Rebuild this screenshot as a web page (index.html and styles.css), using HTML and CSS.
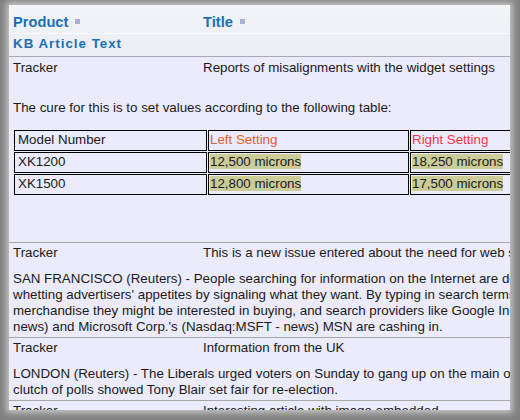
FILE: index.html
```html
<!DOCTYPE html>
<html>
<head>
<meta charset="utf-8">
<link rel="stylesheet" href="styles.css">
</head>
<body>
<div class="frame">
  <div class="panel">
    <div class="hdr">
      <div class="hrow1">
        <div class="c1">Product<span class="sq"></span></div>
        <div class="c2">Title<span class="sq"></span></div>
      </div>
      <div class="hrow2">KB Article Text</div>
    </div>

    <div class="item first">
      <div class="row"><div class="c1">Tracker</div><div class="c2">Reports of misalignments with the widget settings</div></div>
      <div class="body b1">
        <p class="cure">The cure for this is to set values according to the following table:</p>
        <table class="settings">
          <tr><td class="m">Model Number</td><td class="l lh">Left Setting</td><td class="r rh">Right Setting</td></tr>
          <tr><td class="m">XK1200</td><td class="l"><span class="hl">12,500 microns</span></td><td class="r"><span class="hl">18,250 microns</span></td></tr>
          <tr><td class="m">XK1500</td><td class="l"><span class="hl">12,800 microns</span></td><td class="r"><span class="hl">17,500 microns</span></td></tr>
        </table>
      </div>
    </div>

    <div class="item">
      <div class="row"><div class="c1">Tracker</div><div class="c2">This is a new issue entered about the need for web services</div></div>
      <div class="body">SAN FRANCISCO (Reuters) - People searching for information on the Internet are doing more than finding answers --<br>whetting advertisers' appetites by signaling what they want. By typing in search terms, consumers tell retailers what<br>merchandise they might be interested in buying, and search providers like Google Inc. (Nasdaq:GOOG - news), Yahoo Inc. (Nasdaq:YHOO -<br>news) and Microsoft Corp.'s (Nasdaq:MSFT - news) MSN are cashing in.</div>
    </div>

    <div class="item">
      <div class="row"><div class="c1">Tracker</div><div class="c2">Information from the UK</div></div>
      <div class="body">LONDON (Reuters) - The Liberals urged voters on Sunday to gang up on the main opposition Conservatives after a<br>clutch of polls showed Tony Blair set fair for re-election.</div>
    </div>

    <div class="item">
      <div class="row"><div class="c1">Tracker</div><div class="c2">Interesting article with image embedded</div></div>
    </div>
  </div>
</div>
</body>
</html>
```

FILE: styles.css
```css
body {
  margin: 0;
  background: #808080;
  font-family: "Liberation Sans", Arial, sans-serif;
  font-size: 13.33px;
  color: #1a1a1a;
}

.frame {
  padding: 5px 10px 10px 9px;
}

.panel {
  width: 501px;
  height: 405px;
  overflow: hidden;
  background: #ebebfb;
  box-shadow: 0 0 6px 3px #c4c4c4;
}

.hrow1 {
  display: flex;
  padding: 9px 0 3px 4px;
  line-height: 16px;
  font-size: 14.67px;
  font-weight: bold;
  color: #1a70b6;
  background: linear-gradient(#f4f5f9, #eef0f5);
}

.hrow2 {
  border-top: 1px solid #f8f9fb;
  border-bottom: 1px solid #a8a8b6;
  padding: 2px 0 4px 4px;
  line-height: 16px;
  font-size: 13.33px;
  font-weight: bold;
  letter-spacing: 1px;
  color: #1a70b6;
  background: #edeff4;
}

.sq {
  display: inline-block;
  width: 5px;
  height: 5px;
  margin-left: 7px;
  vertical-align: 3px;
  background: #a9b0d2;
}

.c1 {
  width: 190px;
  flex: none;
}

.c2 {
  white-space: nowrap;
}

.item {
  border-bottom: 1px solid #a8a8a8;
  padding: 2px 0 2px 4px;
}

.item.first {
  padding-top: 3px;
}

.row {
  display: flex;
  line-height: 16px;
}

.body {
  padding-top: 10px;
  line-height: 16px;
  white-space: nowrap;
}

.body.b1 {
  padding-top: 24px;
}

.cure {
  margin: 0;
}

.settings {
  border-collapse: separate;
  border-spacing: 1px;
  margin: 13px 0 44px 0;
  table-layout: fixed;
  width: 599px;
}

.settings td {
  border: 1px solid #000;
  padding: 1px 2px 3px;
  line-height: 15px;
  box-sizing: border-box;
}

.settings td.m {
  width: 193px;
  padding-left: 3px;
}

.settings td.l {
  width: 201px;
  padding-left: 1px;
}

.settings td.r {
  width: 201px;
  padding-left: 1px;
}

.lh {
  color: #e0602e;
}

.rh {
  color: #ff3344;
}

.hl {
  background: #cccc99;
}
```
